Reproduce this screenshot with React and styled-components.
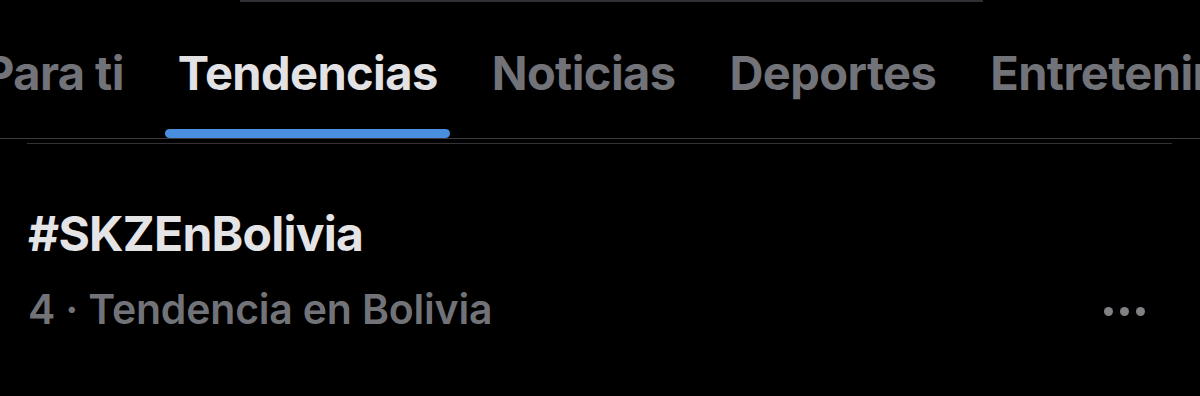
import styled, { createGlobalStyle } from "styled-components";

const GlobalStyle = createGlobalStyle`
  html, body {
    margin: 0;
    padding: 0;
    background: #000;
  }
  body {
    font-family: Inter, "Noto Sans", "Liberation Sans", sans-serif;
    -webkit-font-smoothing: antialiased;
  }
`;

const Screen = styled.div`
  width: 1200px;
  height: 396px;
  background: #000;
  overflow: hidden;
`;

const TopEdge = styled.div`
  height: 2px;
  width: 743px;
  margin-left: 240px;
  background: #2f3033;
`;

const TabBar = styled.nav`
  height: 136px;
  border-bottom: 1px solid #3b3b3d;
  display: flex;
  align-items: flex-end;
  overflow: hidden;
`;

const TabList = styled.div`
  display: flex;
  gap: 29px;
  margin-left: -29px;
  white-space: nowrap;
`;

const Tab = styled.div`
  display: flex;
  flex-direction: column;
  align-items: stretch;
  font-size: 47px;
  font-weight: 700;
  letter-spacing: -0.6px;
  color: ${(p) => (p.$active ? "#e2e2e4" : "#727378")};
  line-height: 1;
`;

const TabLabel = styled.span`
  display: block;
  padding: 0 12px 33px 13px;
`;

const Indicator = styled.span`
  display: block;
  height: 9px;
  border-radius: 5px;
  background: ${(p) => (p.$active ? "#4a8fdf" : "transparent")};
`;

const Divider = styled.div`
  height: 1px;
  margin: 4px 28px 0 27px;
  background: #333336;
`;

const TrendItem = styled.article`
  display: flex;
  align-items: flex-end;
  justify-content: space-between;
  padding: 64px 28px 0 28px;
`;

const TrendInfo = styled.div`
  display: flex;
  flex-direction: column;
`;

const TrendTitle = styled.h2`
  margin: 0;
  font-size: 48px;
  font-weight: 700;
  line-height: 52px;
  letter-spacing: -0.75px;
  color: #e4e4e6;
`;

const TrendMeta = styled.p`
  margin: 26px 0 0 0;
  font-size: 41px;
  font-weight: 600;
  line-height: 46px;
  letter-spacing: -0.2px;
  color: #727378;
`;

const MoreButton = styled.button`
  border: none;
  background: transparent;
  padding: 0;
  margin: 0 27px 16px 0;
  display: flex;
  gap: 7px;
`;

const Dot = styled.span`
  width: 9px;
  height: 9px;
  border-radius: 50%;
  background: #818186;
`;

const tabs = ["Para ti", "Tendencias", "Noticias", "Deportes", "Entretenimiento"];

export default function App() {
  return (
    <Screen>
      <GlobalStyle />
      <TopEdge />
      <TabBar>
        <TabList>
          {tabs.map((t) => (
            <Tab key={t} $active={t === "Tendencias"}>
              <TabLabel>{t}</TabLabel>
              <Indicator $active={t === "Tendencias"} />
            </Tab>
          ))}
        </TabList>
      </TabBar>
      <Divider />
      <TrendItem>
        <TrendInfo>
          <TrendTitle>#SKZEnBolivia</TrendTitle>
          <TrendMeta>4 · Tendencia en Bolivia</TrendMeta>
        </TrendInfo>
        <MoreButton aria-label="Más opciones">
          <Dot />
          <Dot />
          <Dot />
        </MoreButton>
      </TrendItem>
    </Screen>
  );
}
